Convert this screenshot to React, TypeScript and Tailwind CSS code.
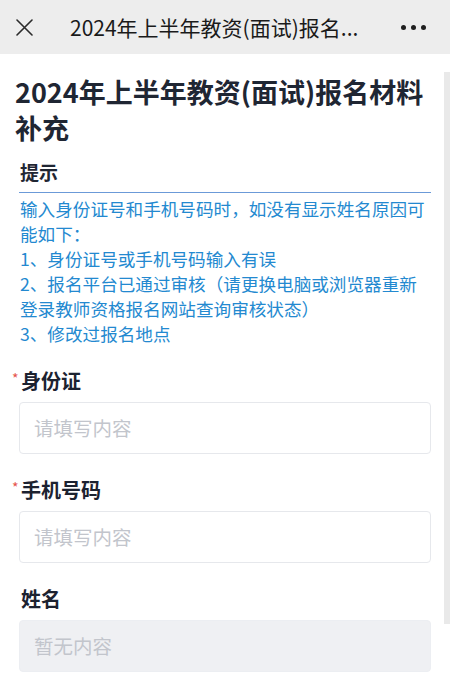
import React from "react";

const font = { fontFamily: '"Noto Sans CJK SC", "Noto Sans", sans-serif' };

function Field({ label, required, placeholder, disabled }: { label: string; required?: boolean; placeholder: string; disabled?: boolean }) {
  return (
    <div className="mb-[22px]">
      <div className="relative h-[28px] pl-[21px] text-[20px] font-bold leading-[28px] text-[#1c2230]">
        {required && (
          <span className="absolute left-[12px] top-[-3px] text-[14px] font-normal text-[#e5534b]">*</span>
        )}
        {label}
      </div>
      <div
        className={
          "mx-[19px] mt-[7px] flex h-[52px] items-center rounded-[4px] border px-[14px] text-[19.5px] text-[#c2c5cc] " +
          (disabled ? "border-[#eceef2] bg-[#eff0f3]" : "border-[#e6e8ec] bg-white")
        }
      >
        {placeholder}
      </div>
    </div>
  );
}

export default function App() {
  return (
    <div className="relative min-h-[760px] w-[450px] overflow-hidden bg-white" style={font}>
      {/* Header */}
      <div className="flex h-[54px] items-center bg-[#ededed]">
        <div className="flex w-[70px] items-center pl-[16px]">
          <svg width="17" height="17" viewBox="0 0 17 17" fill="none" stroke="#2b2b2b" strokeWidth="1.6" strokeLinecap="round">
            <path d="M1 1L16 16M16 1L1 16" />
          </svg>
        </div>
        <div className="whitespace-nowrap text-[21px] leading-[54px] text-[#1a1a1a]">
          2024年上半年教资(面试)报名...
        </div>
        <div className="ml-auto mr-[24px] flex items-center gap-[5px]">
          <span className="h-[5px] w-[5px] rounded-full bg-[#1f1f1f]" />
          <span className="h-[5px] w-[5px] rounded-full bg-[#1f1f1f]" />
          <span className="h-[5px] w-[5px] rounded-full bg-[#1f1f1f]" />
        </div>
      </div>

      {/* Title */}
      <h1 className="mt-[20px] px-[15px] text-[27px] font-bold leading-[36px] text-[#1f2633]">
        2024年上半年教资(面试)报名材料补充
      </h1>

      {/* Tip */}
      <div className="mx-[19px] mt-[13px]">
        <div className="border-b border-[#6b9ad8] pb-[7px] pl-[1px] text-[19px] font-bold leading-[26px] text-[#1f2633]">
          提示
        </div>
        <div className="pt-[3px] pl-[1px] text-[17.6px] leading-[25px] text-[#2389d0]">
          <p>输入身份证号和手机号码时，如没有显示姓名原因可能如下：</p>
          <p>1、身份证号或手机号码输入有误</p>
          <p>2、报名平台已通过审核（请更换电脑或浏览器重新登录教师资格报名网站查询审核状态）</p>
          <p>3、修改过报名地点</p>
        </div>
      </div>

      {/* Form */}
      <div className="mt-[21px]">
        <Field label="身份证" required placeholder="请填写内容" />
        <Field label="手机号码" required placeholder="请填写内容" />
        <Field label="姓名" placeholder="暂无内容" disabled />
      </div>

      {/* scrollbar overlay */}
      <div className="absolute left-[444px] top-[72px] h-[552px] w-[6px] bg-[#e9e9e9]" />
    </div>
  );
}
